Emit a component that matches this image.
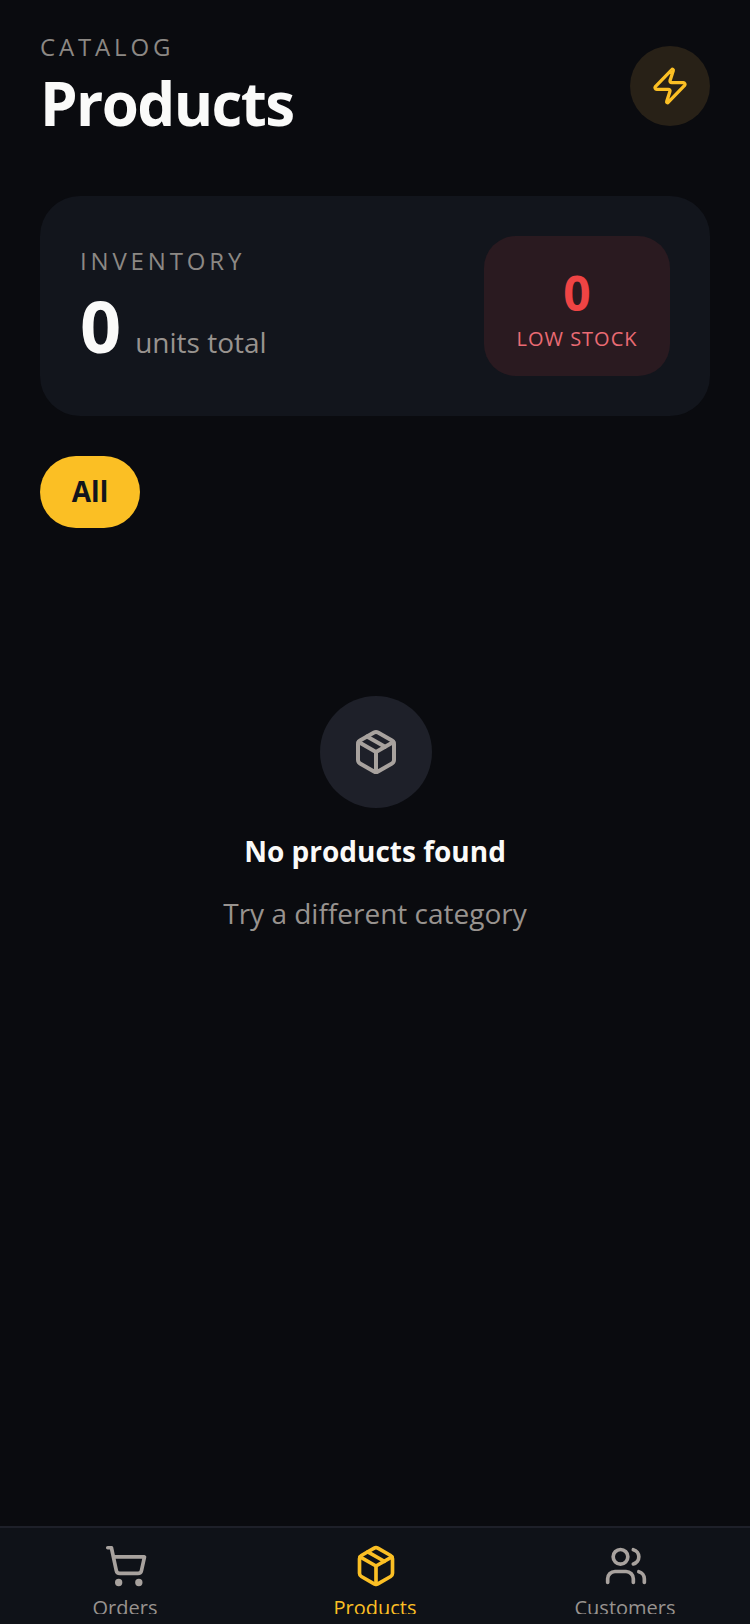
<script>
</script>

<div class="page">
  <header class="top">
    <div class="titles">
      <div class="eyebrow">CATALOG</div>
      <h1>Products</h1>
    </div>
    <button class="bolt" aria-label="Quick action">
      <svg width="40" height="40" viewBox="0 0 24 24" fill="none" stroke="#fbbf24" stroke-width="2" stroke-linecap="round" stroke-linejoin="round"><path d="M4 14a1 1 0 0 1-.78-1.63l9.9-10.2a.5.5 0 0 1 .86.46l-1.92 6.02A1 1 0 0 0 13 10h7a1 1 0 0 1 .78 1.63l-9.9 10.2a.5.5 0 0 1-.86-.46l1.92-6.02A1 1 0 0 0 11 14z"/></svg>
    </button>
  </header>

  <section class="card">
    <div class="inv">
      <div class="inv-label">INVENTORY</div>
      <div class="inv-row"><span class="big">0</span><span class="units">units total</span></div>
    </div>
    <div class="low">
      <div class="low-num">0</div>
      <div class="low-label">LOW STOCK</div>
    </div>
  </section>

  <div class="chips"><button class="chip">All</button></div>

  <section class="empty">
    <div class="empty-circle">
      <svg width="48" height="48" viewBox="0 0 24 24" fill="none" stroke="#a8a29e" stroke-width="2" stroke-linecap="round" stroke-linejoin="round"><path d="M21 8a2 2 0 0 0-1-1.73l-7-4a2 2 0 0 0-2 0l-7 4A2 2 0 0 0 3 8v8a2 2 0 0 0 1 1.73l7 4a2 2 0 0 0 2 0l7-4A2 2 0 0 0 21 16z"/><path d="m3.3 7 8.7 5 8.7-5"/><path d="M12 22V12"/><path d="m7.5 4.27 9 5.15"/></svg>
    </div>
    <div class="empty-title">No products found</div>
    <div class="empty-sub">Try a different category</div>
  </section>

  <nav class="tabs">
    <div class="tab">
      <svg viewBox="0 0 24 24" fill="none" stroke="#a8a29e" stroke-width="2" stroke-linecap="round" stroke-linejoin="round"><circle cx="8" cy="21" r="1"/><circle cx="19" cy="21" r="1"/><path d="M2.05 2.05h2l2.66 12.42a2 2 0 0 0 2 1.58h9.78a2 2 0 0 0 1.95-1.57l1.65-7.43H5.12"/></svg>
      <span>Orders</span>
    </div>
    <div class="tab active">
      <svg viewBox="0 0 24 24" fill="none" stroke="#fbbf24" stroke-width="2" stroke-linecap="round" stroke-linejoin="round"><path d="M21 8a2 2 0 0 0-1-1.73l-7-4a2 2 0 0 0-2 0l-7 4A2 2 0 0 0 3 8v8a2 2 0 0 0 1 1.73l7 4a2 2 0 0 0 2 0l7-4A2 2 0 0 0 21 16z"/><path d="m3.3 7 8.7 5 8.7-5"/><path d="M12 22V12"/><path d="m7.5 4.27 9 5.15"/></svg>
      <span>Products</span>
    </div>
    <div class="tab">
      <svg viewBox="0 0 24 24" fill="none" stroke="#a8a29e" stroke-width="2" stroke-linecap="round" stroke-linejoin="round"><path d="M16 21v-2a4 4 0 0 0-4-4H6a4 4 0 0 0-4 4v2"/><circle cx="9" cy="7" r="4"/><path d="M22 21v-2a4 4 0 0 0-3-3.87"/><path d="M16 3.13a4 4 0 0 1 0 7.75"/></svg>
      <span>Customers</span>
    </div>
  </nav>
</div>

<style>
  :global(body) { margin: 0; background: #0a0b0f; }
  .page {
    width: 750px; height: 1624px; box-sizing: border-box; position: relative; overflow: hidden;
    background: #0a0b0f; font-family: "Open Sans", sans-serif; color: #fafaf9;
    display: flex; flex-direction: column; padding: 31px 40px 0;
  }
  .top { display: flex; justify-content: space-between; align-items: flex-start; height: 133px; margin-bottom: 32px; }
  .eyebrow { font-size: 24px; line-height: 32px; font-weight: 400; letter-spacing: 3.84px; color: #8c8884; }
  h1 { margin: 4px 0 0; font-size: 60px; line-height: 72px; font-weight: 700; letter-spacing: -1.6px; }
  .bolt { width: 80px; height: 80px; margin-top: 15px; border: 0; border-radius: 50%; padding: 0; background: #282117; display: flex; align-items: center; justify-content: center; }
  .card { height: 220px; box-sizing: border-box; border-radius: 40px; background: #12151c; padding: 40px; display: flex; justify-content: space-between; align-items: center; }
  .inv-label { font-size: 24px; line-height: 32px; font-weight: 400; letter-spacing: 3.84px; color: #8c8884; }
  .inv-row { display: flex; align-items: baseline; gap: 14px; margin-top: 6px; }
  .big { font-size: 72px; line-height: 84px; font-weight: 700; color: #fafaf9; }
  .units { font-size: 28px; color: #98938f; }
  .low { width: 186px; height: 140px; box-sizing: border-box; padding-top: 4px; border-radius: 32px; background: #2a1a20; display: flex; flex-direction: column; align-items: center; justify-content: center; }
  .low-num { font-size: 48px; line-height: 60px; font-weight: 700; color: #ef4444; }
  .low-label { margin-top: 2px; font-size: 20px; line-height: 28px; letter-spacing: 1px; color: #ea6b74; }
  .chips { margin-top: 40px; display: flex; }
  .chip { height: 72px; width: 100px; border: 0; border-radius: 36px; background: #fbbf24; color: #12151c; font: 700 28px "Open Sans", sans-serif; padding: 0 0 2px; }
  .empty { margin-top: 168px; display: flex; flex-direction: column; align-items: center; }
  .empty-circle { width: 112px; height: 112px; margin-left: 2px; border-radius: 50%; background: #1e2029; display: flex; align-items: center; justify-content: center; }
  .empty-title { margin-top: 23px; font-size: 28px; line-height: 40px; font-weight: 700; color: #fafaf9; }
  .empty-sub { margin-top: 22px; font-size: 28px; line-height: 40px; color: #98938f; }
  .tabs { position: absolute; left: 0; right: 0; bottom: 0; height: 98px; box-sizing: border-box; border-top: 2px solid #1e2029; background: #0f1218; display: flex; overflow: hidden; }
  .tab { flex: 1; display: flex; flex-direction: column; align-items: center; padding-top: 16px; height: 86px; overflow: hidden; box-sizing: border-box; font-size: 20px; color: #98938f; }
  .tab svg { flex: none; width: 44px; height: 44px; margin-left: 2px; }
  .tab span { line-height: 28px; margin-top: 6px; }
  .tab.active { color: #fbbf24; }
</style>
